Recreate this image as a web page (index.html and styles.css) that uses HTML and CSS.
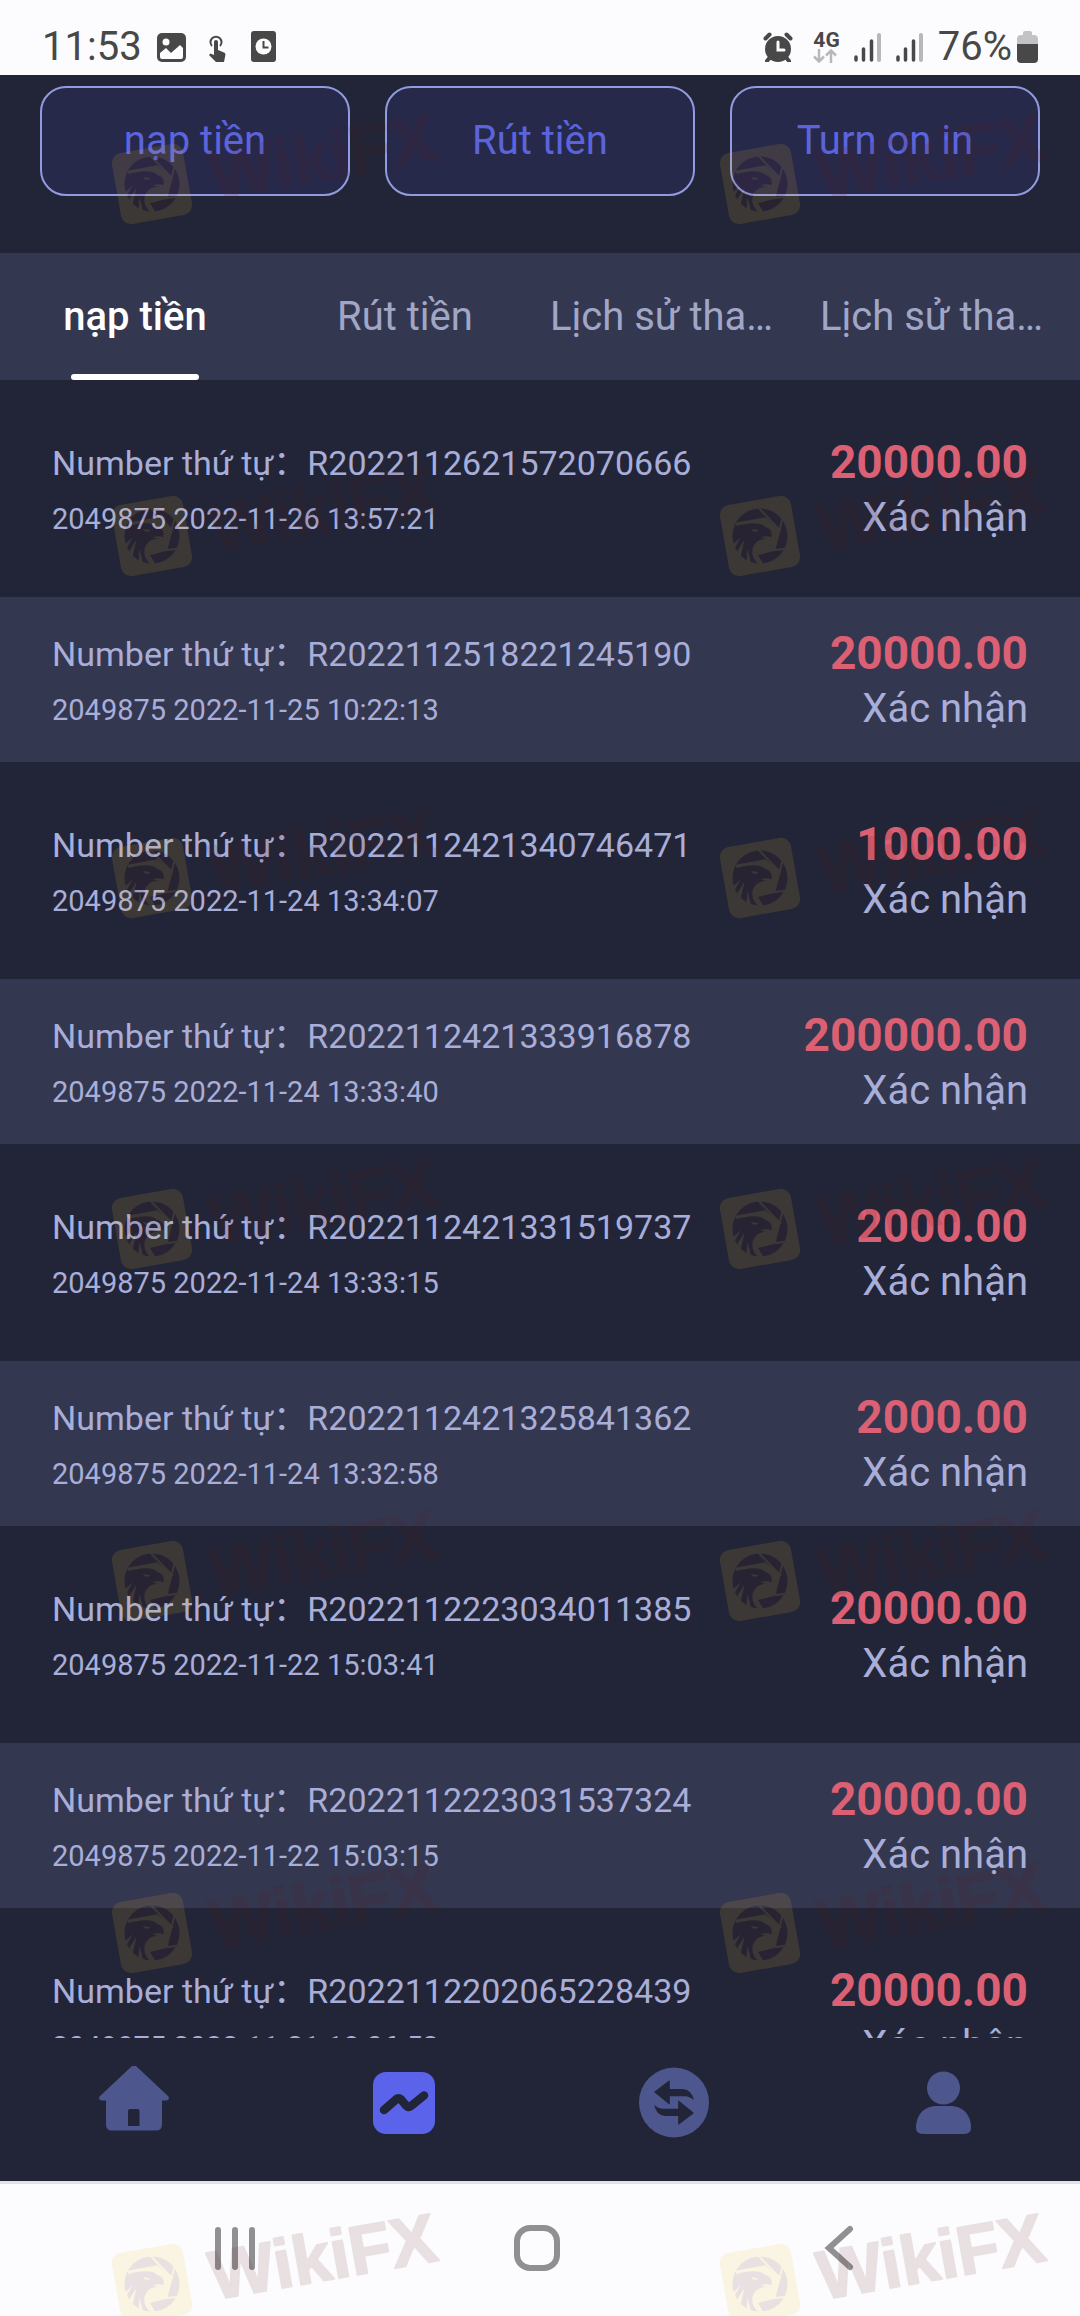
FILE: index.html
```html
<!DOCTYPE html>
<html lang="vi">
<head>
    <meta charset="UTF-8">
    <meta name="viewport" content="width=device-width, initial-scale=1">
    <title>Lịch sử nạp tiền</title>
    <link rel="stylesheet" href="styles.css">
</head>
<body>
    <header class="status-bar">
        <div class="status-left">
            <span class="status-text">11:53</span>
            <svg width="30" height="30" viewBox="0 0 30 30">
                <rect width="29" height="29" y="1" rx="5" fill="#484848"/>
                <circle cx="9" cy="10" r="3.5" fill="#fcfcfe"/>
                <path d="M3 21l6-5 5 5 9-8 3 3v9a2 2 0 0 1-2 2H5a2 2 0 0 1-2-2z" fill="#fcfcfe"/>
            </svg>
            <svg width="24" height="30" viewBox="0 0 24 30">
                <path d="M5 14a5.500 5.500 0 1 1 8 0" fill="none" stroke="#484848" stroke-width="2"/>
                <path d="M7 10a2 2 0 0 1 4 0v8l6 2.500c1.500.6 1.500 1.500 1.300 3L17 30H9l-7-7 1.500-1.500L7 23z" fill="#484848"/>
            </svg>
            <svg width="25" height="31" viewBox="0 0 25 31">
                <rect width="25" height="31" rx="3" fill="#484848"/>
                <circle cx="12.500" cy="15.500" r="8" fill="#fcfcfe"/>
                <path d="M12.500 10v6.500h5" fill="none" stroke="#484848" stroke-width="2"/>
            </svg>
        </div>
        <div class="status-right">
            <svg class="alarm" width="30" height="30" viewBox="0 0 30 30">
                <circle cx="15" cy="17" r="13" fill="#484848"/>
                <path d="M2.500 6.500l4-4M27.500 6.500l-4-4M4 29l4-5M26 29l-4-5" stroke="#484848" stroke-width="4" stroke-linecap="round"/>
                <path d="M15 10v8h6" fill="none" stroke="#fcfcfe" stroke-width="3" stroke-linecap="round"/>
            </svg>
            <span class="network">4G
                <svg width="24" height="14" viewBox="0 0 24 14">
                    <path d="M6 0v12M1 7.500l5 5 5-5M18 14V2M13 6.500l5-5 5 5" fill="none" stroke="#b8b8ba" stroke-width="2.500"/>
                </svg>
            </span>
            <svg width="28" height="30" viewBox="0 0 28 30">
                <path d="M2 25v3M9.500 17v11M17.500 9v19" stroke="#484848" stroke-width="3.500" stroke-linecap="round"/>
                <path d="M25 3v25" stroke="#b8b8ba" stroke-width="4" stroke-linecap="round"/>
            </svg>
            <svg width="28" height="30" viewBox="0 0 28 30">
                <path d="M2 25v3M9.500 17v11M17.500 9v19" stroke="#484848" stroke-width="3.500" stroke-linecap="round"/>
                <path d="M25 3v25" stroke="#b8b8ba" stroke-width="4" stroke-linecap="round"/>
            </svg>
            <span class="status-text percent">76%</span>
            <svg width="21" height="32" viewBox="0 0 21 32">
                <path d="M6 2a2 2 0 0 1 2-2h5a2 2 0 0 1 2 2v2h2a4 4 0 0 1 4 4v5H0V8a4 4 0 0 1 4-4h2z" fill="#c2c2c4"/>
                <path d="M0 13h21v15a4 4 0 0 1-4 4H4a4 4 0 0 1-4-4z" fill="#484848"/>
            </svg>
        </div>
    </header>

    <div class="actions">
        <button type="button" class="action-btn">nạp tiền</button>
        <button type="button" class="action-btn">Rút tiền</button>
        <button type="button" class="action-btn">Turn on in</button>
    </div>

    <nav class="tabs">
        <button type="button" class="tab active">nạp tiền</button>
        <button type="button" class="tab">Rút tiền</button>
        <button type="button" class="tab long">Lịch sử tha…</button>
        <button type="button" class="tab long">Lịch sử tha…</button>
    </nav>

    <main class="history">
        <ul class="records">
            <li class="record">
                <div class="info"><p class="order">Number thứ tự：R2022112621572070666</p><p class="time">2049875 2022-11-26 13:57:21</p></div>
                <div class="result"><p class="amount">20000.00</p><p class="state">Xác nhận</p></div>
            </li>
            <li class="record">
                <div class="info"><p class="order">Number thứ tự：R2022112518221245190</p><p class="time">2049875 2022-11-25 10:22:13</p></div>
                <div class="result"><p class="amount">20000.00</p><p class="state">Xác nhận</p></div>
            </li>
            <li class="record">
                <div class="info"><p class="order">Number thứ tự：R2022112421340746471</p><p class="time">2049875 2022-11-24 13:34:07</p></div>
                <div class="result"><p class="amount">1000.00</p><p class="state">Xác nhận</p></div>
            </li>
            <li class="record">
                <div class="info"><p class="order">Number thứ tự：R2022112421333916878</p><p class="time">2049875 2022-11-24 13:33:40</p></div>
                <div class="result"><p class="amount">200000.00</p><p class="state">Xác nhận</p></div>
            </li>
            <li class="record">
                <div class="info"><p class="order">Number thứ tự：R2022112421331519737</p><p class="time">2049875 2022-11-24 13:33:15</p></div>
                <div class="result"><p class="amount">2000.00</p><p class="state">Xác nhận</p></div>
            </li>
            <li class="record">
                <div class="info"><p class="order">Number thứ tự：R2022112421325841362</p><p class="time">2049875 2022-11-24 13:32:58</p></div>
                <div class="result"><p class="amount">2000.00</p><p class="state">Xác nhận</p></div>
            </li>
            <li class="record">
                <div class="info"><p class="order">Number thứ tự：R2022112223034011385</p><p class="time">2049875 2022-11-22 15:03:41</p></div>
                <div class="result"><p class="amount">20000.00</p><p class="state">Xác nhận</p></div>
            </li>
            <li class="record">
                <div class="info"><p class="order">Number thứ tự：R2022112223031537324</p><p class="time">2049875 2022-11-22 15:03:15</p></div>
                <div class="result"><p class="amount">20000.00</p><p class="state">Xác nhận</p></div>
            </li>
            <li class="record">
                <div class="info"><p class="order">Number thứ tự：R2022112202065228439</p><p class="time">2049875 2022-11-21 18:06:52</p></div>
                <div class="result"><p class="amount">20000.00</p><p class="state">Xác nhận</p></div>
            </li>
        </ul>
    </main>

    <nav class="app-nav">
        <a href="#home" class="nav-link" aria-label="Home">
            <svg width="72" height="72" viewBox="0 0 72 72">
                <path fill="currentColor" fill-rule="evenodd" d="M33 0q2-1.500 4 0l32.500 30.500q1.500 3.500-2 4H63v24q0 6-6 6H13q-6 0-6-6v-24H2.500q-3.500-.5-2-4zM31 43q-2 0-2 2v15h11.500V45q0-2-2-2z"/>
            </svg>
        </a>
        <a href="#records" class="nav-link current" aria-label="Records">
            <svg width="72" height="72" viewBox="0 0 72 72">
                <rect x="4" y="6" width="62" height="62" rx="13" fill="currentColor"/>
                <path d="M15 44L27 33.500q2.500-2.300 5 0l5 6q2.500 2.500 5 .5L55 29.500" fill="none" stroke="#212537" stroke-width="8.500" stroke-linecap="round"/>
            </svg>
        </a>
        <a href="#exchange" class="nav-link" aria-label="Exchange">
            <svg width="72" height="72" viewBox="0 0 72 72">
                <circle cx="35" cy="36.500" r="35" fill="currentColor"/>
                <path fill="#212537" d="M15 26l15-11.500q.8-.3.8.8V23H44q9 1 10.800 11.300-4-4-9-4H30.800V38q0 .8-.8.300z"/>
                <path fill="#212537" transform="rotate(180 35 36.500)" d="M15 26l15-11.500q.8-.3.8.8V23H44q9 1 10.800 11.300-4-4-9-4H30.800V38q0 .8-.8.300z"/>
            </svg>
        </a>
        <a href="#account" class="nav-link" aria-label="Account">
            <svg width="72" height="72" viewBox="0 0 72 72">
                <circle cx="34.500" cy="22" r="16.500" fill="currentColor"/>
                <path fill="currentColor" d="M28 40h13c14 0 21 10 21 22q0 6-8 6H15q-8 0-8-6c0-12 7-22 21-22z"/>
            </svg>
        </a>
    </nav>

    <footer class="system-nav">
        <button type="button" class="system-btn" aria-label="Recent apps">
            <svg width="46" height="46" viewBox="0 0 46 46">
                <path d="M6 5v37M23 5v37M40 5v37" stroke-linecap="round"/>
            </svg>
        </button>
        <button type="button" class="system-btn" aria-label="Home screen">
            <svg width="46" height="46" viewBox="0 0 46 46">
                <rect x="3" y="3" width="40" height="40" rx="13"/>
            </svg>
        </button>
        <button type="button" class="system-btn" aria-label="Back">
            <svg width="46" height="46" viewBox="0 0 46 46">
                <path d="M34 4L13 23l21 19" stroke-linecap="round"/>
            </svg>
        </button>
    </footer>

    <!-- repeated brand overlay -->
    <svg class="watermarks" aria-hidden="true">
        <defs>
            <g id="mark" opacity="0.12">
                <rect x="4" y="4" width="72" height="72" rx="10" fill="#f2be28" transform="rotate(-10 40 40)"/>
                <circle cx="40" cy="40" r="27.500" fill="#5c1c18"/>
                <g transform="scale(.3333) translate(-60 -192)">
                    <path fill="#f2be28" d="M106 272L196 256L242 294L224 356L172 370L186 398L176 396C155 380 150 350 168 332C180 320 196 320 206 323L182 316C194 311 206 312 214 316C218 302 212 288 194 284C184 272 150 270 110 282Z"/>
                    <path fill="#f2be28" d="M152 291l24 4q-10 8-18 2zM98 338l24-22-18 32zM108 364l26-42-14 60zM140 390l2-40 12 46-6 2z"/>
                    <path stroke="#f2be28" stroke-width="6" d="M176 228L242 296M252 242L222 358M222 354L264 350M170 368L188 398"/>
                </g>
                <text class="mark-text" x="102" y="56" transform="rotate(-10 102 56)">WikiFX</text>
            </g>
        </defs>
        <use href="#mark" x="112" y="144"/>
        <use href="#mark" x="720" y="144"/>
        <use href="#mark" x="112" y="496"/>
        <use href="#mark" x="720" y="496"/>
        <use href="#mark" x="112" y="838"/>
        <use href="#mark" x="720" y="838"/>
        <use href="#mark" x="112" y="1189"/>
        <use href="#mark" x="720" y="1189"/>
        <use href="#mark" x="112" y="1541"/>
        <use href="#mark" x="720" y="1541"/>
        <use href="#mark" x="112" y="1893"/>
        <use href="#mark" x="720" y="1893"/>
        <use href="#mark" x="112" y="2244"/>
        <use href="#mark" x="720" y="2244"/>
    </svg>
</body>
</html>
```
FILE: styles.css
```css
* {
    box-sizing: border-box;
}

body {
    position: relative;
    display: flex;
    flex-direction: column;
    height: 100vh;
    margin: 0;
    overflow: hidden;
    background-color: #212537;
    font-family: Roboto, "Noto Sans CJK SC", sans-serif;
}

p {
    margin: 0;
}

button {
    font-family: inherit;
    cursor: pointer;
}

svg {
    display: block;
    flex-shrink: 0;
}

/* status bar */
.status-bar {
    display: flex;
    justify-content: space-between;
    height: 75px;
    padding: 18px 42px 0;
    background-color: #fcfcfe;
    color: #484848;
}

.status-left,
.status-right {
    display: flex;
    align-items: center;
    height: 57px;
}

.status-left {
    gap: 20px;
}

.status-right {
    gap: 14px;
}

.status-text {
    font-size: 40px;
    line-height: 58px;
}

.status-left .status-text {
    margin-right: -5px;
}

.percent {
    margin-right: -9px;
}

.alarm {
    margin-right: 6px;
}

.network {
    font-size: 21px;
    font-weight: 700;
    line-height: 18px;
}

/* top buttons */
.actions {
    display: grid;
    grid-template-columns: repeat(3, 1fr);
    gap: 35px;
    padding: 11px 40px 57px;
}

.action-btn {
    height: 110px;
    padding: 0 0 2px;
    border: 2px solid #929be0;
    border-radius: 26px;
    background-color: #27294a;
    color: #5c64dc;
    font-size: 40px;
}

/* tabs */
.tabs {
    display: grid;
    grid-template-columns: repeat(4, 1fr);
    background-color: #343750;
}

.tab {
    position: relative;
    height: 127px;
    padding: 0 10px;
    border: none;
    background: none;
    color: #a0a7c6;
    font-size: 40px;
    white-space: nowrap;
}

.tab.long {
    overflow: hidden;
    text-align: left;
    text-overflow: ellipsis;
}

.tab.active {
    color: #fff;
    font-weight: 500;
}

.tab.active::after {
    content: "";
    position: absolute;
    bottom: 0;
    left: 50%;
    width: 128px;
    height: 6px;
    margin-left: -64px;
    border-radius: 3px;
    background-color: #fff;
}

/* record list */
.history {
    flex: 1;
    min-height: 0;
    overflow: hidden;
}

.records {
    display: flex;
    flex-direction: column;
    gap: 26px;
    margin: 0;
    padding: 26px 0;
    list-style: none;
}

.record {
    display: flex;
    justify-content: space-between;
    padding: 28px 52px 25px;
    color: #a9aed8;
    line-height: 56px;
}

.record:nth-child(even) {
    background-color: #343750;
}

.order {
    font-size: 34px;
    line-height: 58px;
}

.time {
    font-size: 29px;
    line-height: 54px;
}

.result {
    text-align: right;
}

.amount {
    color: #dc6074;
    font-size: 46px;
    font-weight: 700;
}

.state {
    font-size: 40px;
}

/* bottom navigation */
.app-nav {
    display: grid;
    grid-template-columns: repeat(4, 1fr);
    padding: 28px 0 43px;
}

.nav-link {
    display: flex;
    justify-content: center;
    color: #4d578d;
}

.nav-link.current {
    color: #5a63ea;
}

.system-nav {
    display: grid;
    grid-template-columns: repeat(3, 1fr);
    height: 135px;
    padding: 0 90px 4px 84px;
    border-top: 3px solid #dfe2ea;
    background-color: #fcfcfe;
}

.system-btn {
    display: flex;
    align-items: center;
    justify-content: center;
    padding: 0;
    border: none;
    background: none;
}

.system-btn svg {
    fill: none;
    stroke: #909092;
    stroke-width: 6px;
}

.watermarks {
    position: absolute;
    top: 0;
    left: 0;
    width: 100%;
    height: 100%;
    pointer-events: none;
}

.mark-text {
    fill: #5c1c18;
    stroke: #5c1c18;
    stroke-width: 2px;
    stroke-linejoin: round;
    font-family: "Liberation Sans", sans-serif;
    font-size: 69px;
    font-weight: 700;
}
```
